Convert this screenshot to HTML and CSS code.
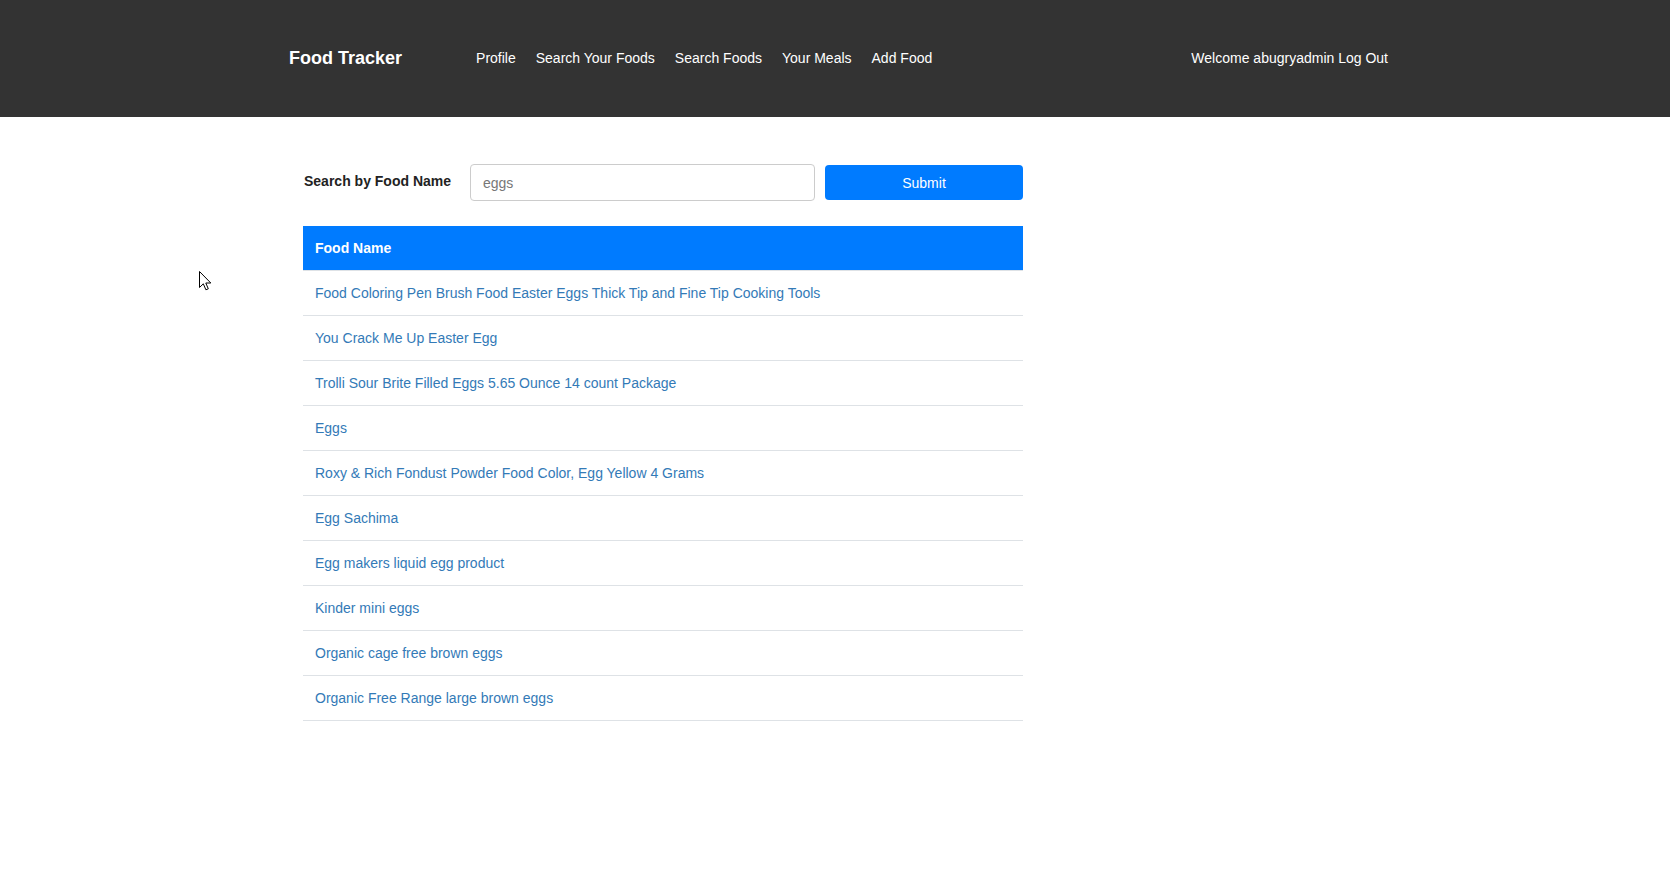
FILE: index.html
```html
<!DOCTYPE html>
<html lang="en">
<head>
<meta charset="utf-8">
<title>Food Tracker</title>
<link rel="stylesheet" href="styles.css">
</head>
<body>
<header class="topbar">
  <div class="topbar-inner">
    <a class="brand" href="#">Food Tracker</a>
    <nav class="nav">
      <a href="#">Profile</a>
      <a href="#">Search Your Foods</a>
      <a href="#">Search Foods</a>
      <a href="#">Your Meals</a>
      <a href="#">Add Food</a>
    </nav>
    <div class="user"><span>Welcome abugryadmin</span> <a href="#">Log Out</a></div>
  </div>
</header>
<main class="main">
  <form class="search">
    <label class="search-label" for="q">Search by Food Name</label>
    <input class="search-input" id="q" type="text" value="eggs">
    <button class="search-btn" type="button">Submit</button>
  </form>
  <table class="results">
    <thead>
      <tr><th>Food Name</th></tr>
    </thead>
    <tbody>
      <tr><td><a href="#">Food Coloring Pen Brush Food Easter Eggs Thick Tip and Fine Tip Cooking Tools</a></td></tr>
      <tr><td><a href="#">You Crack Me Up Easter Egg</a></td></tr>
      <tr><td><a href="#">Trolli Sour Brite Filled Eggs 5.65 Ounce 14 count Package</a></td></tr>
      <tr><td><a href="#">Eggs</a></td></tr>
      <tr><td><a href="#">Roxy &amp; Rich Fondust Powder Food Color, Egg Yellow 4 Grams</a></td></tr>
      <tr><td><a href="#">Egg Sachima</a></td></tr>
      <tr><td><a href="#">Egg makers liquid egg product</a></td></tr>
      <tr><td><a href="#">Kinder mini eggs</a></td></tr>
      <tr><td><a href="#">Organic cage free brown eggs</a></td></tr>
      <tr><td><a href="#">Organic Free Range large brown eggs</a></td></tr>
    </tbody>
  </table>
</main>
<svg class="cursor" width="13" height="20" viewBox="0 0 13 20" aria-hidden="true">
  <path d="M0.5 0.5 L0.5 16.5 L4.3 12.8 L6.9 18.8 L9.3 17.8 L6.8 12 L11.8 12 Z" fill="#fff" stroke="#000" stroke-width="1" stroke-linejoin="miter"/>
</svg>
</body>
</html>
```

FILE: styles.css
```css
* { box-sizing: border-box; }

html, body {
  margin: 0;
  padding: 0;
  background: #fff;
}

body {
  font-family: "Liberation Sans", Arial, sans-serif;
  font-size: 14px;
  line-height: 20px;
  color: #333;
  position: relative;
  min-height: 890px;
}

a { text-decoration: none; }

.topbar {
  background: #333;
  height: 117px;
}

.topbar-inner {
  width: 1100px;
  margin-left: calc(50% - 546px);
  height: 100%;
  display: flex;
  align-items: center;
}

.brand {
  color: #fff;
  font-size: 18px;
  font-weight: bold;
  line-height: 20px;
  margin-right: 64px;
  padding-bottom: 2px;
}

.nav {
  display: flex;
  align-items: center;
  padding-bottom: 2px;
}

.nav a {
  color: #fff;
  padding: 0 10px;
}

.user {
  margin-left: auto;
  color: #fff;
  padding-right: 1px;
  padding-bottom: 2px;
}

.user a { color: #fff; }

.main {
  width: 720px;
  margin-left: calc(50% - 532px);
  padding-top: 47px;
}

.search {
  display: flex;
  align-items: center;
  height: 37px;
  margin: 0 0 25px 0;
}

.search-label {
  font-weight: bold;
  color: #222;
  width: 167px;
  padding-left: 1px;
  padding-bottom: 4px;
}

.search-input {
  width: 345px;
  height: 37px;
  border: 1px solid #ccc;
  border-radius: 4px;
  padding: 0 12px;
  font-family: "Liberation Sans", Arial, sans-serif;
  font-size: 14px;
  color: #777;
  outline: none;
}

.search-btn {
  flex: 1;
  margin-left: 10px;
  height: 35px;
  border: 0;
  border-radius: 4px;
  background: #007bff;
  color: #fff;
  font-family: "Liberation Sans", Arial, sans-serif;
  font-size: 14px;
}

.results {
  width: 100%;
  border-collapse: collapse;
  border-bottom: 1px solid #dee2e6;
}

.results th {
  background: #007bff;
  color: #fff;
  text-align: left;
  font-weight: bold;
  padding: 12px 12px;
  line-height: 20px;
}

.results td {
  border-top: 1px solid #dee2e6;
  padding: 12px 12px;
  line-height: 20px;
}

.results td a { color: #337ab7; }

.cursor {
  position: absolute;
  left: 199px;
  top: 271px;
}
```
